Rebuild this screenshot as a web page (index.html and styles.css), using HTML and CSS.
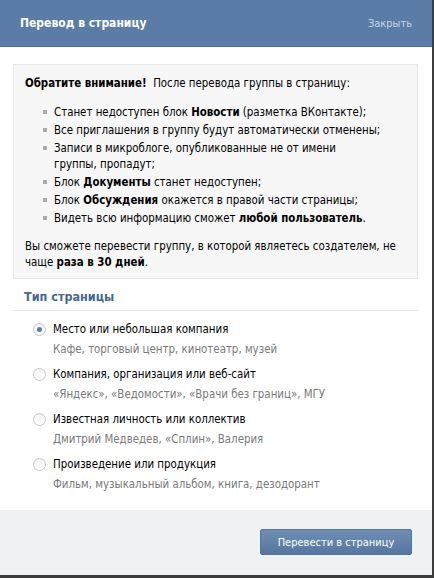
FILE: index.html
```html
<!DOCTYPE html>
<html lang="ru">
<head>
<meta charset="utf-8">
<title>Перевод в страницу</title>
<link rel="stylesheet" href="styles.css">
</head>
<body>
<div class="dialog">
  <div class="header">
    <div class="title">Перевод в страницу</div>
    <div class="close">Закрыть</div>
  </div>
  <div class="content">
    <div class="notice">
      <div class="notice-head"><b>Обратите внимание!</b>&nbsp; После перевода группы в страницу:</div>
      <ul class="notice-list">
        <li>Станет недоступен блок <b>Новости</b> (разметка ВКонтакте);</li>
        <li>Все приглашения в группу будут автоматически отменены;</li>
        <li>Записи в микроблоге, опубликованные не от имени<br>группы, пропадут;</li>
        <li>Блок <b>Документы</b> станет недоступен;</li>
        <li>Блок <b>Обсуждения</b> окажется в правой части страницы;</li>
        <li>Видеть всю информацию сможет <b>любой пользователь</b>.</li>
      </ul>
      <div class="notice-foot">Вы сможете перевести группу, в которой являетесь создателем, не<br>чаще <b>раза в 30 дней</b>.</div>
    </div>
    <div class="section-title">Тип страницы</div>
    <div class="options">
      <div class="option">
        <div class="option-row"><span class="radio checked"></span><span class="label">Место или небольшая компания</span></div>
        <div class="hint">Кафе, торговый центр, кинотеатр, музей</div>
      </div>
      <div class="option">
        <div class="option-row"><span class="radio"></span><span class="label">Компания, организация или веб-сайт</span></div>
        <div class="hint">«Яндекс», «Ведомости», «Врачи без границ», МГУ</div>
      </div>
      <div class="option">
        <div class="option-row"><span class="radio"></span><span class="label">Известная личность или коллектив</span></div>
        <div class="hint">Дмитрий Медведев, «Сплин», Валерия</div>
      </div>
      <div class="option">
        <div class="option-row"><span class="radio"></span><span class="label">Произведение или продукция</span></div>
        <div class="hint">Фильм, музыкальный альбом, книга, дезодорант</div>
      </div>
    </div>
  </div>
  <div class="footer">
    <button class="btn">Перевести в страницу</button>
  </div>
</div>
</body>
</html>
```
FILE: styles.css
```css
html, body {
  margin: 0;
  padding: 0;
  background: #3c3c3c;
}
body {
  font-family: "DejaVu Sans Condensed", "DejaVu Sans", "Liberation Sans", sans-serif;
  font-stretch: condensed;
  font-size: 11.4px;
  color: #000;
}
.dialog {
  width: 432px;
  height: 575px;
  background: #fff;
  display: flex;
  flex-direction: column;
}
.header {
  height: 47px;
  flex: none;
  background: #5b7ca6;
  display: flex;
  align-items: center;
  justify-content: space-between;
  padding: 0 20px;
  border-bottom: 1px solid #4f6f98;
  box-sizing: border-box;
}
.title {
  color: #fff;
  font-weight: bold;
  font-size: 12px;
}
.close {
  color: #c5d4e7;
  font-size: 11px;
}
.content {
  flex: 1;
  padding: 17px 14px 0 13px;
}
.notice {
  background: #f7f7f7;
  border: 1px solid #e7e7e7;
  padding: 10px 11px 8px 11px;
  line-height: 16px;
}
.notice-list {
  list-style: none;
  margin: 13px 0 0 0;
  padding: 0 0 0 29px;
}
.notice-list li {
  position: relative;
  margin-bottom: 2px;
}
.notice-list li::before {
  content: "";
  position: absolute;
  left: -11px;
  top: 6px;
  width: 4px;
  height: 4px;
  background: #a9a9a9;
}
.notice-foot {
  margin-top: 12px;
}
.section-title {
  margin-top: 9px;
  padding: 0 11px 4px;
  line-height: 18px;
  font-size: 12.5px;
  font-weight: bold;
  color: #45688e;
  border-bottom: 1px solid #e5e9ee;
}
.options {
  padding: 10px 0 0 20px;
}
.option {
  margin-bottom: 9px;
}
.option-row {
  display: flex;
  align-items: center;
  gap: 7px;
  line-height: 16px;
}
.radio {
  width: 13px;
  height: 13px;
  box-sizing: border-box;
  border-radius: 50%;
  border: 1px solid #c8c8c8;
  background: linear-gradient(#f3f3f3, #ffffff);
  display: flex;
  align-items: center;
  justify-content: center;
  flex: none;
}
.radio.checked::after {
  content: "";
  width: 5px;
  height: 5px;
  border-radius: 50%;
  background: #5b7ca6;
}
.label {
  color: #000;
}
.hint {
  margin-top: 4px;
  padding-left: 20px;
  line-height: 16px;
  color: #7a7a7a;
}
.footer {
  height: 65px;
  flex: none;
  background: #f0f1f3;
  display: flex;
  justify-content: flex-end;
  align-items: flex-start;
  padding: 19px 20px 0 0;
  box-sizing: border-box;
}
.btn {
  height: 26px;
  width: 152px;
  border: 1px solid #55759d;
  border-radius: 2px;
  background: linear-gradient(#6f8fb6, #56769f);
  color: #fff;
  font-family: inherit;
  font-stretch: condensed;
  font-size: 11px;
  padding: 0;
}
```
